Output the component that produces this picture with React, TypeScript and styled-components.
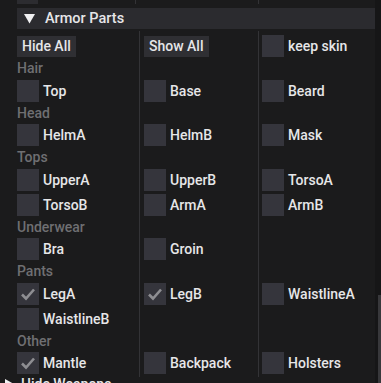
import styled, { createGlobalStyle } from "styled-components";

//style
const GlobalStyle = createGlobalStyle`
  html, body {
    margin: 0;
    padding: 0;
    background: #1b1b1c;
    overflow: hidden;
  }
  body {
    font-family: Roboto, "Liberation Sans", sans-serif;
    font-size: 14px;
    font-weight: 500;
    color: #e6e6e8;
  }
`;
const Page = styled.div`
  display: flex;
  width: 381px;
  height: 383px;
  overflow: hidden;
`;
const Main = styled.div`
  width: 358px;
  padding-left: 17px;
  display: flex;
  flex-direction: column;
  & > * {
    flex: none;
  }
`;
const ScrollTrack = styled.div`
  width: 6px;
  background: #161617;
  display: flex;
  justify-content: flex-end;
  padding-top: 295px;
`;
const ScrollGrab = styled.div`
  width: 3px;
  background: #38383b;
`;
const PrevRow = styled.div`
  display: grid;
  grid-template-columns: 118px 123px 116px;
  height: 4px;
`;
const PrevCell = styled.div<{ $sep?: boolean }>`
  border-left: ${p => (p.$sep ? "1px solid #333336" : "none")};
`;
const PrevBox = styled.div`
  width: 21px;
  height: 4px;
  background: #2c2c30;
`;
const Header = styled.div`
  margin-top: 4px;
  height: 21px;
  background: #2b2b2f;
  display: flex;
  align-items: center;
  padding-left: 7px;
  gap: 10px;
  font-size: 14.5px;
`;
const Arrow = styled.svg`
  width: 11px;
  height: 10px;
  flex: none;
`;
const Table = styled.div`
  margin-top: 2px;
  display: grid;
  grid-template-columns: 122px 119px 116px;
`;
const Cell = styled.div<{ $col: number; $first?: boolean }>`
  border-left: ${p => (p.$col > 0 ? "1px solid #333336" : "none")};
  padding-left: ${p => (p.$col === 1 ? 4 : p.$col === 2 ? 3 : 0)}px;
  padding-top: ${p => (p.$first ? 4 : 0)}px;
  padding-bottom: 3px;
  display: flex;
  align-items: center;
`;
const Button = styled.div`
  height: 21px;
  padding: 0 5px;
  background: #2f2f33;
  display: flex;
  align-items: center;
`;
const Category = styled.div`
  height: 16.5px;
  line-height: 16.5px;
  color: #6f6f72;
`;
const Check = styled.div`
  display: flex;
  align-items: center;
  gap: 4px;
  height: 22px;
`;
const Box = styled.div`
  width: 22px;
  height: 22px;
  background: #35353c;
  display: flex;
  align-items: center;
  justify-content: center;
`;
const Footer = styled.div`
  display: flex;
  align-items: center;
  gap: 6px;
  margin-left: -13px;
  margin-top: -3px;
  height: 20px;
`;

//data
interface IItem {
    label: string;
    checked?: boolean;
}
type Row =
    | { kind: "buttons" }
    | { kind: "label"; text: string }
    | { kind: "checks"; items: (IItem | null)[] };

const rows: Row[] = [
    { kind: "buttons" },
    { kind: "label", text: "Hair" },
    { kind: "checks", items: [{ label: "Top" }, { label: "Base" }, { label: "Beard" }] },
    { kind: "label", text: "Head" },
    { kind: "checks", items: [{ label: "HelmA" }, { label: "HelmB" }, { label: "Mask" }] },
    { kind: "label", text: "Tops" },
    { kind: "checks", items: [{ label: "UpperA" }, { label: "UpperB" }, { label: "TorsoA" }] },
    { kind: "checks", items: [{ label: "TorsoB" }, { label: "ArmA" }, { label: "ArmB" }] },
    { kind: "label", text: "Underwear" },
    { kind: "checks", items: [{ label: "Bra" }, { label: "Groin" }, null] },
    { kind: "label", text: "Pants" },
    { kind: "checks", items: [{ label: "LegA", checked: true }, { label: "LegB", checked: true }, { label: "WaistlineA" }] },
    { kind: "checks", items: [{ label: "WaistlineB" }, null, null] },
    { kind: "label", text: "Other" },
    { kind: "checks", items: [{ label: "Mantle", checked: true }, { label: "Backpack" }, { label: "Holsters" }] },
];

function Checkbox({ label, checked }: IItem) {
    return (
        <Check>
            <Box>
                {checked && (
                    <svg width="16" height="14" viewBox="0 0 16 14">
                        <polyline points="2,7.5 6,11.5 14,2.5" fill="none" stroke="#8e8e92" strokeWidth="2.6" />
                    </svg>
                )}
            </Box>
            {label}
        </Check>
    );
}

function renderRow(row: Row, r: number) {
    const first = r === 0;
    if (row.kind === "buttons") {
        return [
            <Cell key={`${r}-0`} $col={0} $first><Button>Hide All</Button></Cell>,
            <Cell key={`${r}-1`} $col={1} $first><Button>Show All</Button></Cell>,
            <Cell key={`${r}-2`} $col={2} $first><Checkbox label="keep skin" /></Cell>,
        ];
    }
    if (row.kind === "label") {
        return [
            <Cell key={`${r}-0`} $col={0}><Category>{row.text}</Category></Cell>,
            <Cell key={`${r}-1`} $col={1} />,
            <Cell key={`${r}-2`} $col={2} />,
        ];
    }
    return row.items.map((item, c) => (
        <Cell key={`${r}-${c}`} $col={c} $first={first}>
            {item ? <Checkbox {...item} /> : <Check />}
        </Cell>
    ));
}

function App() {
    return (
        <Page>
            <GlobalStyle />
            <Main>
                <PrevRow>
                    <PrevCell><PrevBox /></PrevCell>
                    <PrevCell $sep />
                    <PrevCell $sep />
                </PrevRow>
                <Header>
                    <Arrow viewBox="0 0 11 10">
                        <polygon points="0,0 11,0 5.5,9.5" fill="#f0f0f2" />
                    </Arrow>
                    Armor Parts
                </Header>
                <Table>{rows.map(renderRow)}</Table>
                <Footer>
                    <Arrow viewBox="0 0 11 10">
                        <polygon points="1,0 10,5 1,10" fill="#f0f0f2" />
                    </Arrow>
                    Hide Weapons
                </Footer>
            </Main>
            <ScrollTrack>
                <ScrollGrab />
            </ScrollTrack>
        </Page>
    );
}

export default App;
